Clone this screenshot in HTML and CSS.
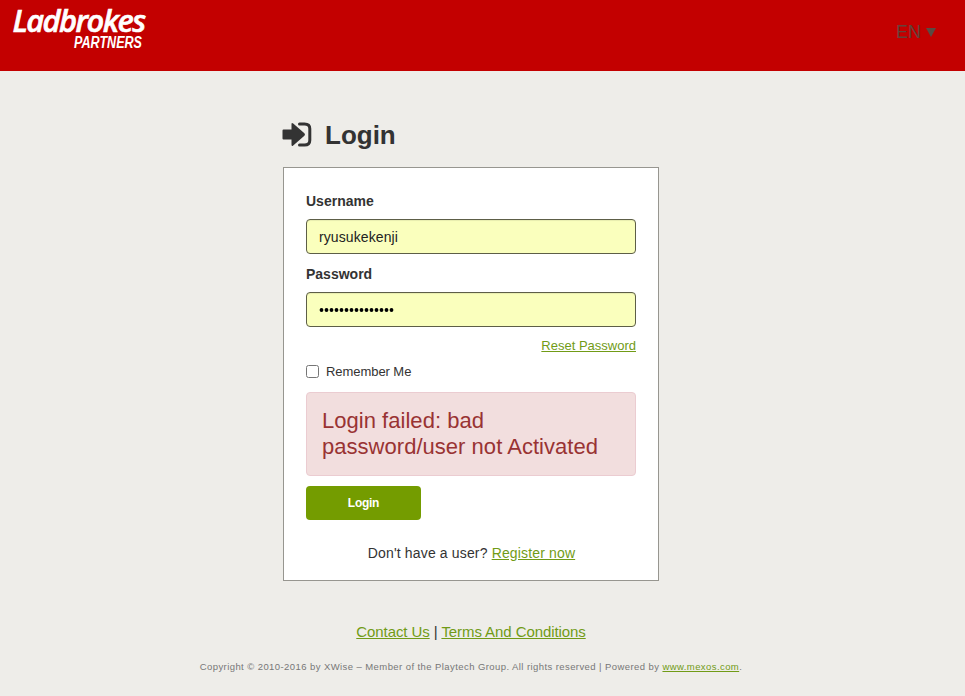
FILE: index.html
```html
<!DOCTYPE html>
<html lang="en">
<head>
<meta charset="utf-8">
<title>Login</title>
<link rel="stylesheet" href="styles.css">
</head>
<body>
<header class="topbar">
  <svg class="logo" width="156" height="60" viewBox="0 0 156 60" role="img" aria-label="Ladbrokes Partners">
    <text class="logo-name" x="12.5" y="32" textLength="132" lengthAdjust="spacingAndGlyphs">Ladbrokes</text>
    <text class="logo-sub" x="74" y="48" textLength="68" lengthAdjust="spacingAndGlyphs">PARTNERS</text>
  </svg>
  <div class="language"><span>EN</span><svg width="10" height="9" viewBox="0 0 10 9"><path d="M0 0H10L5 9Z"/></svg></div>
</header>
<main class="content">
  <h1 class="title">
    <svg width="30" height="25" viewBox="0 0 30 25"><path d="M1.5 7.5H9.5V2.2Q9.5 .3 11.2 1.6L22.4 11.2Q23.6 12.5 22.4 13.8L11.2 23.4Q9.5 24.7 9.5 22.8V17.5H1.5Q.5 17.5 .5 16.5V8.5Q.5 7.5 1.5 7.5Z"/><path class="door" d="M17.5 2H22.5Q27.8 2 27.8 6.8V18.2Q27.8 23 22.5 23H17.5"/></svg>
    <span>Login</span>
  </h1>
  <form class="panel">
    <label class="label" for="user">Username</label>
    <input class="field" id="user" type="text" value="ryusukekenji">
    <label class="label" for="pass">Password</label>
    <div class="field dots" id="pass"><svg width="76" height="6" viewBox="0 0 76 6"><path d="M2.5 3H73"/></svg></div>
    <a class="reset" href="#">Reset Password</a>
    <label class="remember"><input type="checkbox"><span>Remember Me</span></label>
    <div class="alert">Login failed: bad password/user not Activated</div>
    <button class="submit" type="button">Login</button>
    <p class="register">Don't have a user? <a href="#">Register now</a></p>
  </form>
</main>
<footer class="footer">
  <p class="links"><a href="#">Contact Us</a> | <a href="#">Terms And Conditions</a></p>
  <p class="copyright">Copyright © 2010-2016 by XWise – Member of the Playtech Group. All rights reserved | Powered by <a href="#">www.mexos.com</a>.</p>
</footer>
</body>
</html>
```
FILE: styles.css
```css
* { box-sizing: border-box; }
body {
  margin: 0;
  min-height: 696px;
  background: #eeede9;
  color: #333;
  font: 14px/20px "Liberation Sans", Arial, sans-serif;
  overflow: hidden;
}
a { color: #719b16; text-decoration: underline; }
p { margin: 0; }
.topbar {
  display: flex;
  justify-content: space-between;
  height: 71px;
  padding-right: 29px;
  background: #c30000;
}
.logo { overflow: visible; fill: #fff; font-style: italic; font-weight: 700; }
.logo-name { font-family: "Open Sans", sans-serif; font-size: 31px; font-weight: 600; letter-spacing: -1.6px; stroke: #fff; stroke-width: .6; }
.logo-sub { font-family: "Liberation Sans", sans-serif; font-size: 16px; }
.language {
  display: flex;
  align-items: center;
  gap: 5px;
  height: 64px;
  color: #65423a;
  font-size: 18px;
}
.language svg { fill: #594b43; }
.content { width: 376px; margin: 50px 0 0 283px; }
.title {
  display: flex;
  align-items: center;
  gap: 13px;
  height: 28px;
  margin: 0 0 18px -1px;
  font-size: 26px;
  line-height: 28px;
}
.title svg { margin-top: -2px; fill: #333; }
.title .door { fill: none; stroke: #333; stroke-width: 3; stroke-linecap: round; }
.panel {
  display: flex;
  flex-direction: column;
  height: 414px;
  padding: 23px 22px 0;
  border: 1px solid #979690;
  background: #fff;
}
.label { height: 28px; font-weight: 700; }
.field {
  width: 330px;
  height: 35px;
  margin: 0 0 10px;
  padding: 1px 12px 0;
  border: 1px solid #5d5e47;
  border-radius: 4px;
  outline: 0;
  background: #faffbd;
  box-shadow: inset 0 1px 1px rgba(0, 0, 0, .075);
  color: #222;
  font: 14px "Liberation Sans", Arial, sans-serif;
  letter-spacing: .1px;
}
.dots { display: flex; align-items: center; margin-bottom: 9px; }
.dots path { fill: none; stroke: #000; stroke-width: 3.8; stroke-linecap: round; stroke-dasharray: 0 5; }
.reset { align-self: flex-end; height: 20px; font-size: 13px; }
.remember { display: flex; align-items: center; gap: 7px; height: 20px; margin-top: 6px; font-size: 13px; letter-spacing: -.06px; }
.remember input { width: 13px; height: 13px; margin: 0 0 2px; }
.alert {
  height: 84px;
  margin-top: 10px;
  padding: 15px;
  border: 1px solid #ebccd1;
  border-radius: 4px;
  background: #f2dede;
  color: #993333;
  font-size: 22px;
  line-height: 26px;
  letter-spacing: .03px;
}
.submit {
  width: 115px;
  height: 34px;
  margin-top: 10px;
  border: 0;
  border-radius: 4px;
  background: #749c00;
  color: #fff;
  font: 700 12px "Liberation Sans", Arial, sans-serif;
  letter-spacing: -.25px;
}
.register { margin-top: 23px; padding-left: 1px; text-align: center; letter-spacing: .15px; }
.footer { width: 942px; margin-top: 41px; text-align: center; }
.links { font-size: 15px; letter-spacing: -.08px; }
.copyright { margin-top: 15px; color: #777; font-size: 9.5px; letter-spacing: .42px; white-space: nowrap; }
```
